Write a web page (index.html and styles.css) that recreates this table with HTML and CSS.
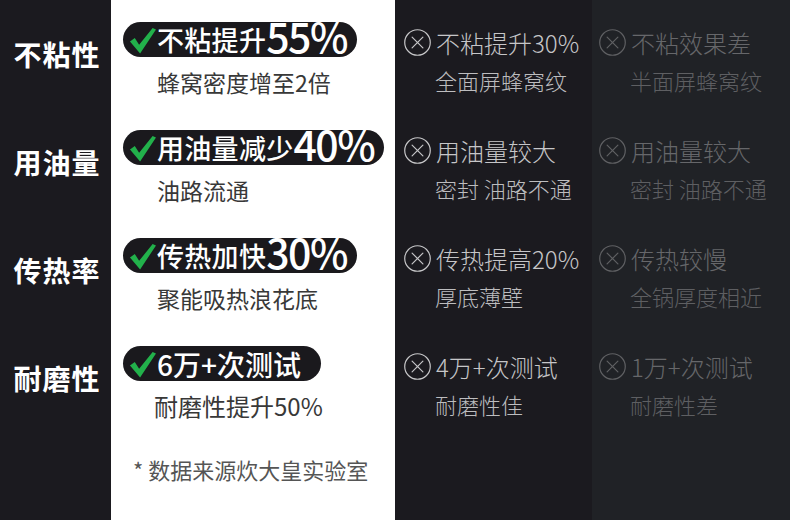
FILE: index.html
```html
<!DOCTYPE html>
<html lang="zh-CN">
<head>
<meta charset="utf-8">
<title>对比</title>
<link rel="stylesheet" href="styles.css">
</head>
<body>
<div class="table">
  <div class="col col-label">
    <div class="cell label">不粘性</div>
    <div class="cell label">用油量</div>
    <div class="cell label">传热率</div>
    <div class="cell label">耐磨性</div>
  </div>

  <div class="col col-ours">
    <div class="cell ours">
      <div class="pill">
        <svg class="tick" viewBox="0 0 28 28"><path d="M1 15 L6 11.5 L10.5 18.5 L24.5 1 L28 2.5 L11.5 27.5 Z"/></svg>
        <span class="pill-text">不粘提升</span><span class="pill-num">55%</span>
      </div>
      <div class="sub">蜂窝密度增至2倍</div>
    </div>
    <div class="cell ours">
      <div class="pill">
        <svg class="tick" viewBox="0 0 28 28"><path d="M1 15 L6 11.5 L10.5 18.5 L24.5 1 L28 2.5 L11.5 27.5 Z"/></svg>
        <span class="pill-text">用油量减少</span><span class="pill-num">40%</span>
      </div>
      <div class="sub">油路流通</div>
    </div>
    <div class="cell ours">
      <div class="pill">
        <svg class="tick" viewBox="0 0 28 28"><path d="M1 15 L6 11.5 L10.5 18.5 L24.5 1 L28 2.5 L11.5 27.5 Z"/></svg>
        <span class="pill-text">传热加快</span><span class="pill-num">30%</span>
      </div>
      <div class="sub">聚能吸热浪花底</div>
    </div>
    <div class="cell ours">
      <div class="pill pill-short">
        <svg class="tick" viewBox="0 0 28 28"><path d="M1 15 L6 11.5 L10.5 18.5 L24.5 1 L28 2.5 L11.5 27.5 Z"/></svg>
        <span class="pill-text">6万+次测试</span>
      </div>
      <div class="sub sub-wide">耐磨性提升50%</div>
    </div>
    <div class="note">* 数据来源炊大皇实验室</div>
  </div>

  <div class="col col-a">
    <div class="cell other">
      <div class="head"><svg class="xicon" viewBox="0 0 26 26"><circle cx="13" cy="13" r="12.3"/><path d="M7.8 7.8 L18.2 18.2 M18.2 7.8 L7.8 18.2"/></svg><span>不粘提升30%</span></div>
      <div class="osub">全面屏蜂窝纹</div>
    </div>
    <div class="cell other">
      <div class="head"><svg class="xicon" viewBox="0 0 26 26"><circle cx="13" cy="13" r="12.3"/><path d="M7.8 7.8 L18.2 18.2 M18.2 7.8 L7.8 18.2"/></svg><span>用油量较大</span></div>
      <div class="osub">密封 油路不通</div>
    </div>
    <div class="cell other">
      <div class="head"><svg class="xicon" viewBox="0 0 26 26"><circle cx="13" cy="13" r="12.3"/><path d="M7.8 7.8 L18.2 18.2 M18.2 7.8 L7.8 18.2"/></svg><span>传热提高20%</span></div>
      <div class="osub">厚底薄壁</div>
    </div>
    <div class="cell other">
      <div class="head"><svg class="xicon" viewBox="0 0 26 26"><circle cx="13" cy="13" r="12.3"/><path d="M7.8 7.8 L18.2 18.2 M18.2 7.8 L7.8 18.2"/></svg><span>4万+次测试</span></div>
      <div class="osub">耐磨性佳</div>
    </div>
  </div>

  <div class="col col-b">
    <div class="cell other">
      <div class="head"><svg class="xicon" viewBox="0 0 26 26"><circle cx="13" cy="13" r="12.3"/><path d="M7.8 7.8 L18.2 18.2 M18.2 7.8 L7.8 18.2"/></svg><span>不粘效果差</span></div>
      <div class="osub">半面屏蜂窝纹</div>
    </div>
    <div class="cell other">
      <div class="head"><svg class="xicon" viewBox="0 0 26 26"><circle cx="13" cy="13" r="12.3"/><path d="M7.8 7.8 L18.2 18.2 M18.2 7.8 L7.8 18.2"/></svg><span>用油量较大</span></div>
      <div class="osub">密封 油路不通</div>
    </div>
    <div class="cell other">
      <div class="head"><svg class="xicon" viewBox="0 0 26 26"><circle cx="13" cy="13" r="12.3"/><path d="M7.8 7.8 L18.2 18.2 M18.2 7.8 L7.8 18.2"/></svg><span>传热较慢</span></div>
      <div class="osub">全锅厚度相近</div>
    </div>
    <div class="cell other">
      <div class="head"><svg class="xicon" viewBox="0 0 26 26"><circle cx="13" cy="13" r="12.3"/><path d="M7.8 7.8 L18.2 18.2 M18.2 7.8 L7.8 18.2"/></svg><span>1万+次测试</span></div>
      <div class="osub">耐磨性差</div>
    </div>
  </div>
</div>
</body>
</html>
```

FILE: styles.css
```css
* { box-sizing: border-box; }
html, body {
  margin: 0;
  padding: 0;
  background: #1b1a1f;
}
body {
  font-family: "Noto Sans CJK SC", "Noto Sans", sans-serif;
}
.table {
  display: flex;
  width: 790px;
  height: 520px;
  overflow: hidden;
}
.col {
  display: flex;
  flex-direction: column;
  height: 520px;
}
.col-label { width: 111px; background: #1b1a1f; }
.col-ours { width: 284px; background: #ffffff; }
.col-a { width: 197px; background: #1b1a1f; }
.col-b { width: 198px; background: #202226; }

.cell { height: 108px; flex: none; }

.label {
  display: flex;
  align-items: center;
  justify-content: center;
  color: #ffffff;
  font-size: 28px;
  font-weight: 700;
  letter-spacing: 1px;
  padding-left: 3px;
}

.ours {
  padding: 22px 0 0 12px;
}
.pill {
  display: inline-flex;
  align-items: center;
  height: 35px;
  padding: 0 10px 0 6px;
  border-radius: 18px;
  background: #1a191d;
  color: #ffffff;
  white-space: nowrap;
}
.tick {
  width: 27px;
  height: 27px;
  fill: #22b14b;
  flex: none;
  margin-right: 1px;
  margin-top: 1px;
}
.pill-text {
  font-size: 27px;
  line-height: 1;
  font-weight: 500;
  letter-spacing: 0.3px;
}
.pill-num {
  font-size: 41px;
  line-height: 1;
  font-weight: 500;
  letter-spacing: -1.5px;
  margin-bottom: 9px;
}
.pill-short .pill-text { font-size: 28px; letter-spacing: 0; }
.pill-short { padding-right: 20px; }

.sub {
  margin: 10px 0 0 34px;
  font-size: 23px;
  line-height: 26px;
  color: #383838;
}
.sub-wide { margin-left: 31px; font-size: 24px; }

.note {
  margin: 24px 0 0 22px;
  font-size: 22px;
  line-height: 26px;
  color: #555555;
}

.other {
  padding: 29px 0 0 9px;
}
.col-b .other { padding-left: 7px; }
.head {
  display: flex;
  align-items: center;
  height: 27px;
  gap: 5px;
  font-size: 24px;
  line-height: 26px;
  font-weight: 300;
  white-space: nowrap;
}
.xicon {
  width: 27px;
  height: 27px;
  flex: none;
  fill: none;
  stroke-width: 1.15;
  stroke-linecap: round;
}
.osub {
  margin: 12px 0 0 31px;
  font-size: 22px;
  line-height: 24px;
  font-weight: 300;
  white-space: nowrap;
}
.col-a .head { color: #c6c6c8; }
.col-a .xicon { stroke: #c6c6c8; }
.col-a .osub { color: #bdbdbf; }
.col-b .head { color: #66676a; }
.col-b .xicon { stroke: #5f6063; }
.col-b .osub { color: #5e5f62; }
```
